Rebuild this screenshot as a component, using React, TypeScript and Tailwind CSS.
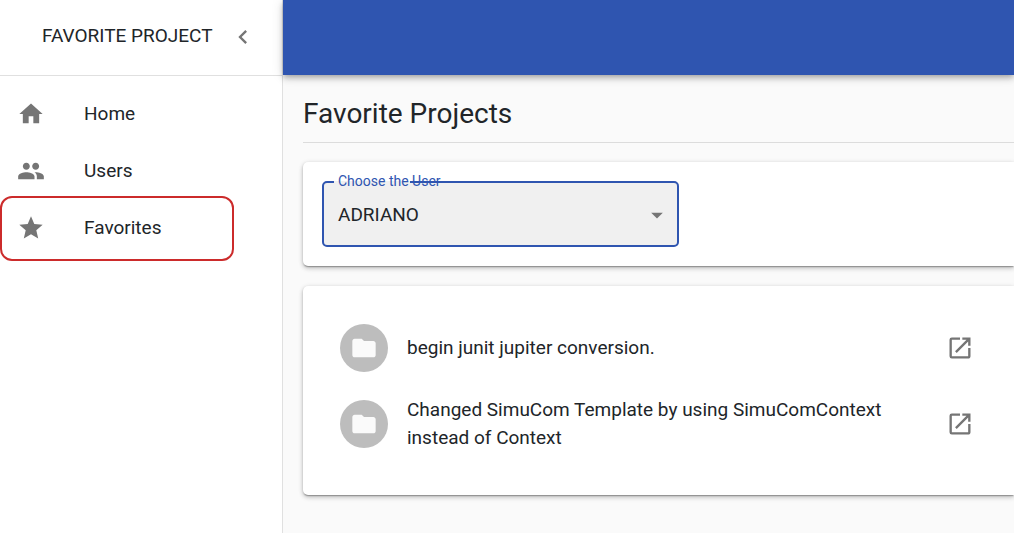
import { useState } from "react";
import type { ReactNode } from "react";
import {
  MdArrowDropDown,
  MdChevronLeft,
  MdFolder,
  MdHome,
  MdOpenInNew,
  MdPeople,
  MdStar,
} from "react-icons/md";

const projects = [
  "begin junit jupiter conversion.",
  "Changed SimuCom Template by using SimuComContext instead of Context",
];

function NavItem({ icon, label, marked = false }: { icon: ReactNode; label: string; marked?: boolean }) {
  return (
    <li className="relative">
      <a href="#" className="flex h-[57px] items-center pl-[17px] text-[19px] leading-7">
        <span className="w-[67px] text-[28px] text-[#757575]">{icon}</span>
        {label}
      </a>
      {marked && (
        <span className="pointer-events-none absolute -top-[3px] left-0 h-[65px] w-[234px] rounded-[12px] border-2 border-[#cc2b2b]" />
      )}
    </li>
  );
}

function Card({ className, children }: { className: string; children: ReactNode }) {
  return (
    <section
      className={`rounded-l-[5px] bg-white shadow-[0_2px_1px_-1px_rgba(0,0,0,0.2),0_1px_2px_rgba(0,0,0,0.14),0_1px_5px_rgba(0,0,0,0.16),0_3px_5px_rgba(0,0,0,0.12)] ${className}`}
    >
      {children}
    </section>
  );
}

function UserSelect() {
  const [user, setUser] = useState("ADRIANO");
  return (
    <div className="relative h-[66px] max-w-[357px]">
      <select
        id="user"
        value={user}
        onChange={(e) => setUser(e.target.value)}
        className="size-full appearance-none rounded-[5px] bg-[#f0f0f0] pt-[2px] text-[19px] indent-4 outline-none"
      >
        <option>ADRIANO</option>
      </select>
      <MdArrowDropDown className="pointer-events-none absolute top-5 right-2 text-[28px] text-[#757575]" />
      <fieldset
        aria-hidden="true"
        className="pointer-events-none absolute inset-x-0 -top-[5px] bottom-0 rounded-[5px] border-2 border-[#2f55b0] pl-[10px]"
      >
        <legend className="h-3 w-[76px]" />
      </fieldset>
      <label htmlFor="user" className="absolute -top-[10px] left-4 text-[14px] leading-5 text-[#2f55b0]">
        Choose the User
      </label>
    </div>
  );
}

export default function App() {
  return (
    <div className="flex min-h-screen bg-[#fafafa] font-['Roboto',sans-serif] text-[#212529]">
      <aside className="w-[283px] shrink-0 border-r border-[#e0e0e0] bg-white">
        <div className="flex h-[76px] items-center border-b border-[#e0e0e0] pb-[2px] pl-[42px] text-[19px]">
          <span className="whitespace-nowrap">FAVORITE PROJECT</span>
          <button type="button" aria-label="Collapse menu" className="ml-4 text-[28px] text-[#757575]">
            <MdChevronLeft />
          </button>
        </div>
        <nav>
          <ul className="py-[9px]">
            <NavItem icon={<MdHome />} label="Home" />
            <NavItem icon={<MdPeople />} label="Users" />
            <NavItem icon={<MdStar />} label="Favorites" marked />
          </ul>
        </nav>
      </aside>
      <div className="min-w-0 flex-1">
        <header className="h-[75px] bg-[#2f55b0] shadow-[0_2px_5px_-1px_rgba(0,0,0,0.2),0_4px_6px_rgba(0,0,0,0.14),0_1px_12px_rgba(0,0,0,0.12)]" />
        <main className="pt-5 pl-5">
          <h1 className="border-b border-[#dcdcdc] pb-[9px] text-[28px] leading-[38px]">Favorite Projects</h1>
          <Card className="mt-[19px] p-[19px]">
            <UserSelect />
          </Card>
          <Card className="mt-5 pt-6 pr-10 pb-[33px] pl-[37px]">
            <ul>
              {projects.map((name) => (
                <li key={name} className="flex min-h-[76px] items-center">
                  <span className="flex size-12 shrink-0 items-center justify-center rounded-full bg-[#bdbdbd] text-[28px] text-[#fafafa]">
                    <MdFolder />
                  </span>
                  <span className="ml-[19px] max-w-[500px] text-[19px] leading-7">{name}</span>
                  <a href="#" aria-label={`Open ${name}`} className="ml-auto text-[28px] text-[#757575]">
                    <MdOpenInNew />
                  </a>
                </li>
              ))}
            </ul>
          </Card>
        </main>
      </div>
    </div>
  );
}
